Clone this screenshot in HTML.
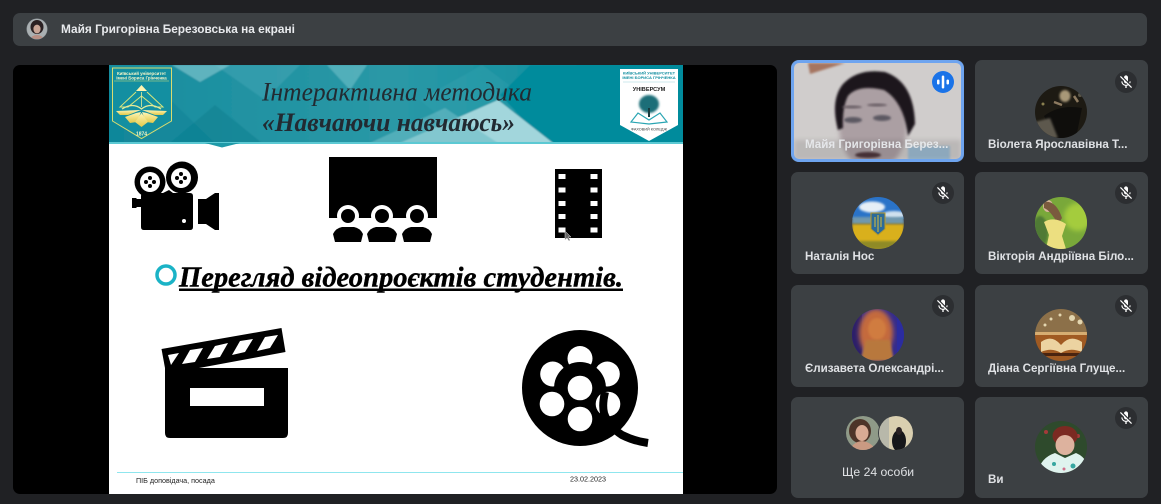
<!DOCTYPE html>
<html><head><meta charset="utf-8">
<style>
html,body{margin:0;padding:0;background:#202124}
body{width:1161px;height:504px;position:relative;overflow:hidden;font-family:"Liberation Sans",sans-serif}
.bar{position:absolute;left:13px;top:13px;width:1134px;height:33px;background:#3c4043;border-radius:7px}
.bt{position:absolute;left:61px;top:21px;font-size:11.85px;font-weight:bold;color:#e8eaed;line-height:16px;white-space:nowrap}
.main{position:absolute;left:13px;top:65px;width:764px;height:429px;background:#000;border-radius:7px}
.t{position:absolute;background:#3c4043;border-radius:7px;width:173px;height:102px}
.n{position:absolute;font-size:11.6px;font-weight:bold;color:#e8eaed;line-height:16px;white-space:nowrap;opacity:.95}
svg{position:absolute;left:0;top:0}
</style></head><body>
<div class="bar"></div>
<div class="bt">Майя Григорівна Березовська на екрані</div>
<div class="main"></div>
<div class="t" style="left:791px;top:60px"></div>
<div class="t" style="left:975px;top:60px"></div>
<div class="t" style="left:791px;top:172px"></div>
<div class="t" style="left:975px;top:172px"></div>
<div class="t" style="left:791px;top:285px"></div>
<div class="t" style="left:975px;top:285px"></div>
<div class="t" style="left:791px;top:397px;height:101px"></div>
<div class="t" style="left:975px;top:397px;height:101px"></div>

<svg width="1161" height="504" viewBox="0 0 1161 504" xmlns="http://www.w3.org/2000/svg">
<defs>
<linearGradient id="hd" x1="0" y1="0" x2="1" y2="0"><stop offset="0" stop-color="#178c9e"/><stop offset=".5" stop-color="#2a98a6"/><stop offset="1" stop-color="#028b9c"/></linearGradient>
<linearGradient id="gold" x1="0" y1="0" x2="0" y2="1"><stop offset="0" stop-color="#fff6b8"/><stop offset="1" stop-color="#e2c94a"/></linearGradient>
<clipPath id="hc"><rect x="109" y="65" width="574" height="78"/></clipPath>
<clipPath id="vc"><rect x="794" y="63" width="167" height="96" rx="5"/></clipPath>
<clipPath id="a0"><circle cx="37" cy="29" r="10"/></clipPath>
<clipPath id="a1"><circle cx="1061" cy="112" r="26"/></clipPath>
<clipPath id="a2"><circle cx="878" cy="223" r="26"/></clipPath>
<clipPath id="a3"><circle cx="1061" cy="223" r="26"/></clipPath>
<clipPath id="a4"><circle cx="878" cy="335" r="26"/></clipPath>
<clipPath id="a5"><circle cx="1061" cy="335" r="26"/></clipPath>
<clipPath id="a6"><circle cx="863" cy="433" r="17"/></clipPath>
<clipPath id="a7"><circle cx="896" cy="433" r="17"/></clipPath>
<clipPath id="a8"><circle cx="1061" cy="447" r="26"/></clipPath>
<filter id="b1" x="-20%" y="-20%" width="140%" height="140%"><feGaussianBlur stdDeviation="1"/></filter>
<filter id="b2" x="-20%" y="-20%" width="140%" height="140%"><feGaussianBlur stdDeviation="2.5"/></filter>
<filter id="b0"><feGaussianBlur stdDeviation=".35"/></filter>
<filter id="bh" x="0" y="0" width="100%" height="100%"><feGaussianBlur stdDeviation=".8"/></filter>
<symbol id="mo" viewBox="0 0 24 24"><path fill="#fff" d="M19 11h-1.7c0 .74-.16 1.43-.43 2.05l1.23 1.23c.56-.98.9-2.09.9-3.28zm-4.02.17c0-.06.02-.11.02-.17V5c0-1.66-1.34-3-3-3S9 3.34 9 5v.18l5.98 5.99zM4.27 3L3 4.27l6.01 6.01V11c0 1.66 1.33 3 2.99 3 .22 0 .44-.03.65-.08l1.66 1.66c-.71.33-1.5.52-2.31.52-2.76 0-5.3-2.1-5.3-5.1H5c0 3.41 2.72 6.23 6 6.72V21h2v-3.28c.91-.13 1.77-.45 2.54-.9L19.73 21 21 19.73 4.27 3z"/></symbol>
</defs>

<!-- top avatar -->
<circle cx="37" cy="29" r="10.5" fill="#8d9499"/>
<g clip-path="url(#a0)"><rect x="27" y="19" width="20" height="20" fill="#aab0b2"/><ellipse cx="37" cy="27" rx="6.5" ry="7" fill="#2a2022"/><ellipse cx="37" cy="29" rx="3.6" ry="4.4" fill="#c9a596"/><ellipse cx="37" cy="39" rx="6" ry="4" fill="#b98f84"/></g>

<!-- slide -->
<rect x="109" y="65" width="574" height="429" fill="#fff"/>
<g clip-path="url(#hc)">
<g filter="url(#bh)">
<rect x="105" y="61" width="582" height="86" fill="url(#hd)"/>
<polygon points="172,65 300,65 265,100 215,65" fill="#4aa9b7" opacity=".45"/>
<polygon points="172,65 230,65 200,82" fill="#9ed6dc" opacity=".5"/>
<polygon points="109,90 160,90 215,143 109,143" fill="#0d8398" opacity=".6"/>
<polygon points="170,143 215,105 262,143" fill="#0e7f90" opacity=".55"/>
<polygon points="327,65 367,65 350,90" fill="#7cc8d0" opacity=".5"/>
<polygon points="420,100 482,65 530,100 470,143" fill="#3ba6b2" opacity=".3"/>
<polygon points="530,65 690,65 690,150 553,150 500,95" fill="#028b9c"/>
<polygon points="400,143 498,100 553,143" fill="#a2d6dc"/>
<polygon points="370,143 445,108 498,143" fill="#6cbcc6" opacity=".6"/>
</g>
</g>
<rect x="109" y="142" width="574" height="2" fill="#5cc9d3"/>
<polygon points="205,143 240,143 222,147.500" fill="#1e9aa8"/>

<!-- left crest -->
<path d="M112.500 68H171.500V121L141.500 138.500L112.500 121Z" fill="#138fa1" stroke="#d9dc70" stroke-width="1"/>
<text x="141.500" y="75" font-size="4.400" font-weight="bold" fill="#f3f5c8" text-anchor="middle" font-family="Liberation Sans" filter="url(#b0)">Київський університет</text>
<text x="141.500" y="79.500" font-size="4.400" font-weight="bold" fill="#f3f5c8" text-anchor="middle" font-family="Liberation Sans" filter="url(#b0)">імені Бориса Грінченка</text>
<line x1="114" y1="81" x2="169" y2="81" stroke="#d9e27a" stroke-width=".6"/>
<polygon points="141.500,85 147,91 136,91" fill="#fff4b0"/>
<path d="M136 92L120 107H128L141.500 96L155 107H163L147 92" fill="none" stroke="#d8e67c" stroke-width="1"/>
<path d="M122 109Q133 102 141.500 109Q150 102 161 109" fill="none" stroke="#e6ec9a" stroke-width="1.300"/>
<line x1="141.500" y1="92" x2="141.500" y2="107" stroke="#e6ec9a" stroke-width=".8"/>
<polygon points="116,111 141,110 128,115 120,115" fill="url(#gold)"/>
<polygon points="142,110 167,111 163,115 155,115" fill="url(#gold)"/>
<polygon points="125,117 136,113 141,112 137,122 130,123" fill="url(#gold)"/>
<polygon points="158,117 147,113 142,112 146,122 153,123" fill="url(#gold)"/>
<polygon points="141.500,113 148,122 141.500,127 135,122" fill="url(#gold)"/>
<text x="141.500" y="135.500" font-size="5" font-weight="bold" fill="#f3f5c8" text-anchor="middle" font-family="Liberation Sans">1874</text>

<!-- right crest -->
<path d="M620 69H678V125L649 141L620 125Z" fill="#fff"/>
<text x="649" y="74.500" font-size="4" font-weight="bold" fill="#128ea0" text-anchor="middle" font-family="Liberation Sans" filter="url(#b0)">КИЇВСЬКИЙ УНІВЕРСИТЕТ</text>
<text x="649" y="79" font-size="4" font-weight="bold" fill="#128ea0" text-anchor="middle" font-family="Liberation Sans" filter="url(#b0)">ІМЕНІ БОРИСА ГРІНЧЕНКА</text>
<line x1="623" y1="82" x2="675" y2="82" stroke="#9ad5db" stroke-width=".6"/>
<text x="649" y="91" font-size="5.600" font-weight="bold" fill="#222" text-anchor="middle" font-family="Liberation Sans" filter="url(#b0)">УНІВЕРСУМ</text>
<ellipse cx="649" cy="104" rx="10" ry="9" fill="#1c6e78" filter="url(#b1)"/>
<rect x="648" y="108" width="2" height="9" fill="#173c40"/>
<path d="M631 122L638 113L649 120L660 113L667 122L649 124Z" fill="none" stroke="#2aa5b3" stroke-width="1.200"/>
<text x="649" y="130.500" font-size="3.800" fill="#333" text-anchor="middle" font-family="Liberation Sans" filter="url(#b0)">ФАХОВИЙ КОЛЕДЖ</text>

<!-- heading -->
<g filter="url(#b0)" font-family="Liberation Serif" font-style="italic" fill="#232c30">
<text x="262" y="100.500" font-size="26" textLength="270" lengthAdjust="spacingAndGlyphs">Інтерактивна методика</text>
<text x="262" y="131" font-size="26" font-weight="bold" textLength="253" lengthAdjust="spacingAndGlyphs">«Навчаючи навчаюсь»</text>
</g>

<!-- movie camera -->
<g filter="url(#b0)">
<circle cx="150" cy="182" r="15.500" fill="#000"/><circle cx="182" cy="177.500" r="16" fill="#000"/>
<circle cx="150" cy="182" r="10" fill="#fff"/><circle cx="181" cy="178" r="10" fill="#fff"/>
<g fill="#000"><circle cx="150" cy="178" r="2"/><circle cx="150" cy="186" r="2"/><circle cx="146" cy="182" r="2"/><circle cx="154" cy="182" r="2"/><circle cx="181" cy="174" r="2"/><circle cx="181" cy="182" r="2"/><circle cx="177" cy="178" r="2"/><circle cx="185" cy="178" r="2"/></g>
<path d="M141 196Q141 193 144 193H190Q193 193 193 196V227Q193 230 190 230H144Q141 230 141 227V207H137L136 208H132V198H136L137 199H141Z" fill="#000"/>
<polygon points="163,193 169,190 173,193" fill="#000"/>
<circle cx="184" cy="221" r="2" fill="#fff"/>
<path d="M198 199H206L215 193H219V230H215L206 224H198Z" fill="#000"/>
</g>

<!-- cinema -->
<g filter="url(#b0)">
<rect x="329" y="157" width="108" height="61" fill="#000"/>
<circle cx="348" cy="216" r="11" fill="#fff"/><circle cx="348" cy="216" r="7" fill="#000"/>
<path d="M342 227H354Q360 228 363 234L361 242H335L333 234Q336 228 342 227Z" fill="#000"/>
<circle cx="382" cy="216" r="11" fill="#fff"/><circle cx="382" cy="216" r="7" fill="#000"/>
<path d="M376 227H388Q394 228 397 234L395 242H369L367 234Q370 228 376 227Z" fill="#000"/>
<circle cx="417" cy="216" r="11" fill="#fff"/><circle cx="417" cy="216" r="7" fill="#000"/>
<path d="M411 227H423Q429 228 432 234L430 242H404L402 234Q405 228 411 227Z" fill="#000"/>
</g>

<!-- film strip -->
<g filter="url(#b0)">
<rect x="555" y="169" width="47" height="69" fill="#000"/>
<g fill="#fff">
<rect x="558.500" y="174" width="7" height="5"/><rect x="590.500" y="174" width="7" height="5"/>
<rect x="558.500" y="187.500" width="7" height="5"/><rect x="590.500" y="187.500" width="7" height="5"/>
<rect x="558.500" y="201" width="7" height="5"/><rect x="590.500" y="201" width="7" height="5"/>
<rect x="558.500" y="214" width="7" height="5"/><rect x="590.500" y="214" width="7" height="5"/>
<rect x="558.500" y="227.500" width="7" height="5"/><rect x="590.500" y="227.500" width="7" height="5"/>
</g>
<path d="M565 231L565 240L567 238L569 241L570 240L568 237L571 237Z" fill="#666" stroke="#ddd" stroke-width=".5"/>
</g>

<!-- title line -->
<circle cx="166" cy="275" r="9" fill="none" stroke="#1bb3c6" stroke-width="3.500"/>
<text x="179" y="286.500" font-size="29" font-weight="bold" font-style="italic" font-family="Liberation Serif" fill="#000" stroke="#000" stroke-width=".4" textLength="444" lengthAdjust="spacingAndGlyphs" filter="url(#b0)">Перегляд відеопроєктів студентів.</text>
<rect x="179" y="288.500" width="444" height="2.500" fill="#000"/>

<!-- clapper -->
<g filter="url(#b0)">
<polygon points="161.500,349 281.500,328 285.500,352 199,368 165,368" fill="#000"/>
<g fill="#fff">
<polygon points="168,355 179,353 171,365"/>
<polygon points="190,350 203,348 195,362 182,364"/>
<polygon points="215,346 228,343 220,357 207,359"/>
<polygon points="240,341 253,339 245,352 232,355"/>
<polygon points="265,337 278,335 270,348 257,351"/>
</g>
<path d="M165 368H288V433Q288 438 283 438H170Q165 438 165 433Z" fill="#000"/>
<rect x="190" y="388" width="74" height="18" fill="#fff"/>
</g>

<!-- reel -->
<g filter="url(#b0)">
<circle cx="580" cy="388" r="58" fill="#000"/>
<g fill="#fff"><circle cx="580" cy="358.500" r="12.500"/><circle cx="552.700" cy="374" r="12.500"/><circle cx="607.300" cy="374" r="12.500"/></g>
<circle cx="580" cy="388" r="26" fill="#000"/>
<circle cx="580" cy="388" r="12.300" fill="#fff"/><circle cx="580" cy="419" r="12.300" fill="#fff"/><circle cx="552" cy="404" r="12.300" fill="#fff"/><circle cx="608" cy="404" r="12.300" fill="#fff"/>
<path d="M605 392Q602 405 604 413Q608 426 622 435Q634 441 648 443" fill="none" stroke="#000" stroke-width="8"/>
</g>

<!-- footer -->
<rect x="117" y="472" width="566" height="1" fill="#8fe6ee"/>
<g font-family="Liberation Sans" font-size="7.200" fill="#222" filter="url(#b0)">
<text x="136" y="483">ПІБ доповідача, посада</text>
<text x="570" y="481.500">23.02.2023</text>
</g>

<!-- speaker video -->
<rect x="792.500" y="61.500" width="170" height="99" rx="6.500" fill="#6ea4ef" stroke="#6ea4ef" stroke-width="3"/>
<g clip-path="url(#vc)">
<rect x="794" y="63" width="167" height="96" fill="#d0cdcc"/>
<polygon points="808,63 845,63 810,74" fill="#a57560" filter="url(#b1)"/>
<ellipse cx="873" cy="125" rx="34" ry="46" fill="#ab9fa3" filter="url(#b2)"/>
<path d="M838 130Q830 100 843 84Q858 68 885 72Q914 82 915 124L908 136Q904 102 884 90Q858 84 848 96Q842 108 843 128Z" fill="#1f191c" filter="url(#b1)"/>
<ellipse cx="853" cy="120" rx="9" ry="3" fill="#5b5862" filter="url(#b1)"/>
<ellipse cx="882" cy="118" rx="9" ry="3" fill="#5b5862" filter="url(#b1)"/>
<ellipse cx="852" cy="107" rx="10" ry="1.500" fill="#6a5f66" filter="url(#b1)"/>
<ellipse cx="877" cy="105" rx="10" ry="1.500" fill="#6a5f66" filter="url(#b1)"/>
<ellipse cx="868" cy="155" rx="13" ry="3" fill="#4d363a" filter="url(#b1)"/>
<rect x="908" y="146" width="42" height="16" fill="#9ebcd2" filter="url(#b1)"/>
<rect x="794" y="140" width="167" height="20" fill="#000" opacity=".1" filter="url(#b2)"/>
</g>
<circle cx="943" cy="82" r="11" fill="#1a73e8"/>
<g fill="#fff"><rect x="937" y="79.500" width="2.500" height="5" rx="1.250"/><rect x="941.750" y="75.500" width="2.500" height="13" rx="1.250"/><rect x="946.500" y="79.500" width="2.500" height="5" rx="1.250"/></g>

<!-- mute buttons -->
<g><circle cx="1126" cy="82" r="11" fill="#2c2e31"/><use href="#mo" x="1118" y="74" width="16" height="16"/>
<circle cx="943" cy="193" r="11" fill="#2c2e31"/><use href="#mo" x="935" y="185" width="16" height="16"/>
<circle cx="1126" cy="193" r="11" fill="#2c2e31"/><use href="#mo" x="1118" y="185" width="16" height="16"/>
<circle cx="943" cy="306" r="11" fill="#2c2e31"/><use href="#mo" x="935" y="298" width="16" height="16"/>
<circle cx="1126" cy="306" r="11" fill="#2c2e31"/><use href="#mo" x="1118" y="298" width="16" height="16"/>
<circle cx="1126" cy="418" r="11" fill="#2c2e31"/><use href="#mo" x="1118" y="410" width="16" height="16"/></g>

<!-- avatar 1 -->
<g clip-path="url(#a1)"><rect x="1035" y="86" width="52" height="52" fill="#1d1a13"/>
<ellipse cx="1065" cy="96" rx="5.500" ry="6" fill="#a89878" filter="url(#b1)"/>
<path d="M1044 116Q1060 104 1082 108L1076 138H1056Z" fill="#0f0e0c"/>
<path d="M1054 102L1062 105M1074 96L1078 102" stroke="#8d7a60" stroke-width="2.500"/>
<polygon points="1035,122 1050,118 1058,138 1040,138" fill="#5d594e" filter="url(#b1)"/>
<circle cx="1080" cy="95" r="2" fill="#5a5648"/><circle cx="1043" cy="104" r="1.500" fill="#8a8050"/>
</g>
<!-- avatar 2 -->
<g clip-path="url(#a2)"><rect x="852" y="197" width="52" height="22" fill="#2a73c8"/>
<ellipse cx="872" cy="207" rx="13" ry="5.500" fill="#e7eff6" filter="url(#b1)"/><ellipse cx="894" cy="215" rx="12" ry="4" fill="#cfe0ee" filter="url(#b1)"/>
<rect x="852" y="217" width="52" height="7" fill="#6f98ae" filter="url(#b1)"/>
<rect x="852" y="224" width="52" height="25" fill="#d9b01c" filter="url(#b1)"/>
<rect x="852" y="241" width="52" height="8" fill="#8f8a25" filter="url(#b1)"/>
<path d="M871 213H885V229L878 235L871 229Z" fill="#2b6b9a" stroke="#b99a2a" stroke-width="1"/>
<path d="M875 217V227M878 215V232M881 217V227" stroke="#d8bd3a" stroke-width="1"/></g>
<!-- avatar 3 -->
<g clip-path="url(#a3)"><rect x="1035" y="197" width="52" height="52" fill="#79a83a"/>
<ellipse cx="1078" cy="217" rx="14" ry="14" fill="#a4cc3c" filter="url(#b2)"/>
<ellipse cx="1040" cy="232" rx="8" ry="16" fill="#4f7a35" filter="url(#b1)"/>
<ellipse cx="1048" cy="206" rx="5" ry="6" fill="#d8b59c"/>
<path d="M1044 202Q1056 200 1062 218L1058 224Q1050 210 1044 208Z" fill="#7a5a3e"/>
<path d="M1044 222Q1054 216 1066 224L1062 236L1066 249H1046L1049 235Z" fill="#ecdf80"/></g>
<!-- avatar 4 -->
<g clip-path="url(#a4)"><rect x="852" y="309" width="52" height="52" fill="#352c8c"/>
<rect x="852" y="309" width="10" height="52" fill="#2c1f6a"/>
<ellipse cx="876" cy="333" rx="17" ry="24" fill="#c46a3c" filter="url(#b2)"/>
<ellipse cx="877" cy="329" rx="9" ry="11" fill="#d07c40" filter="url(#b1)"/>
<path d="M860 361L866 340L890 340L894 361Z" fill="#b8783e" filter="url(#b1)"/>
<rect x="897" y="310" width="7" height="50" fill="#2b2ca0"/></g>
<!-- avatar 5 -->
<g clip-path="url(#a5)"><rect x="1035" y="309" width="52" height="26" fill="#8c7049"/>
<g fill="#e3d6b0"><circle cx="1051" cy="319" r="1.500"/><circle cx="1060" cy="315" r="1.500"/><circle cx="1045" cy="325" r="1.500"/><circle cx="1072" cy="318" r="3"/><circle cx="1080" cy="322" r="2.500"/></g>
<rect x="1035" y="332" width="52" height="29" fill="#a05a22"/>
<rect x="1035" y="332" width="52" height="3" fill="#d6ad72"/>
<path d="M1041 342Q1052 334 1061 345Q1070 334 1082 342V352Q1070 347 1061 353Q1052 347 1041 352Z" fill="#ecd3a1"/>
<rect x="1041" y="353" width="40" height="3" fill="#4a2410"/></g>
<!-- avatars 6,7 -->
<g clip-path="url(#a6)"><rect x="846" y="416" width="34" height="34" fill="#8f9a88"/>
<ellipse cx="860" cy="431" rx="11" ry="12" fill="#4d3428"/><ellipse cx="862" cy="433" rx="6.500" ry="8" fill="#d9ab94"/><path d="M850 451Q852 442 862 441Q872 442 876 451Z" fill="#c99a82"/></g>
<circle cx="896" cy="433" r="18" fill="#3c4043"/>
<g clip-path="url(#a7)"><rect x="879" y="416" width="34" height="34" fill="#d9cfb0"/>
<rect x="879" y="416" width="10" height="34" fill="#b8b8aa"/>
<ellipse cx="899" cy="441" rx="7" ry="11" fill="#16171a"/><ellipse cx="899" cy="431" rx="3" ry="4" fill="#2a2224"/></g>
<!-- avatar 8 -->
<g clip-path="url(#a8)"><rect x="1035" y="421" width="52" height="52" fill="#2e4a2c"/>
<circle cx="1046" cy="432" r="2" fill="#a33a3a"/><circle cx="1078" cy="436" r="2" fill="#a33a3a"/>
<ellipse cx="1065" cy="436" rx="12.500" ry="10" fill="#7b2a22"/>
<ellipse cx="1065" cy="445" rx="9.500" ry="10" fill="#ddb29e"/>
<path d="M1038 473Q1040 458 1055 453L1065 458L1076 453Q1088 458 1090 473Z" fill="#dff3ee"/>
<circle cx="1054" cy="464" r="2" fill="#36a6a0"/><circle cx="1073" cy="466" r="2.500" fill="#36a6a0"/><circle cx="1064" cy="469" r="1.500" fill="#d0708a"/></g>
</svg>

<div class="n" style="left:805px;top:137px">Майя Григорівна Берез...</div>
<div class="n" style="left:988px;top:137px">Віолета Ярославівна Т...</div>
<div class="n" style="left:805px;top:249px">Наталія Нос</div>
<div class="n" style="left:988px;top:249px">Вікторія Андріївна Біло...</div>
<div class="n" style="left:805px;top:361px">Єлизавета Олександрі...</div>
<div class="n" style="left:988px;top:361px">Діана Сергіївна Глуще...</div>
<div class="n" style="left:842px;top:464px;font-weight:normal;font-size:12.2px">Ще 24 особи</div>
<div class="n" style="left:988px;top:472px">Ви</div>
</body></html>
